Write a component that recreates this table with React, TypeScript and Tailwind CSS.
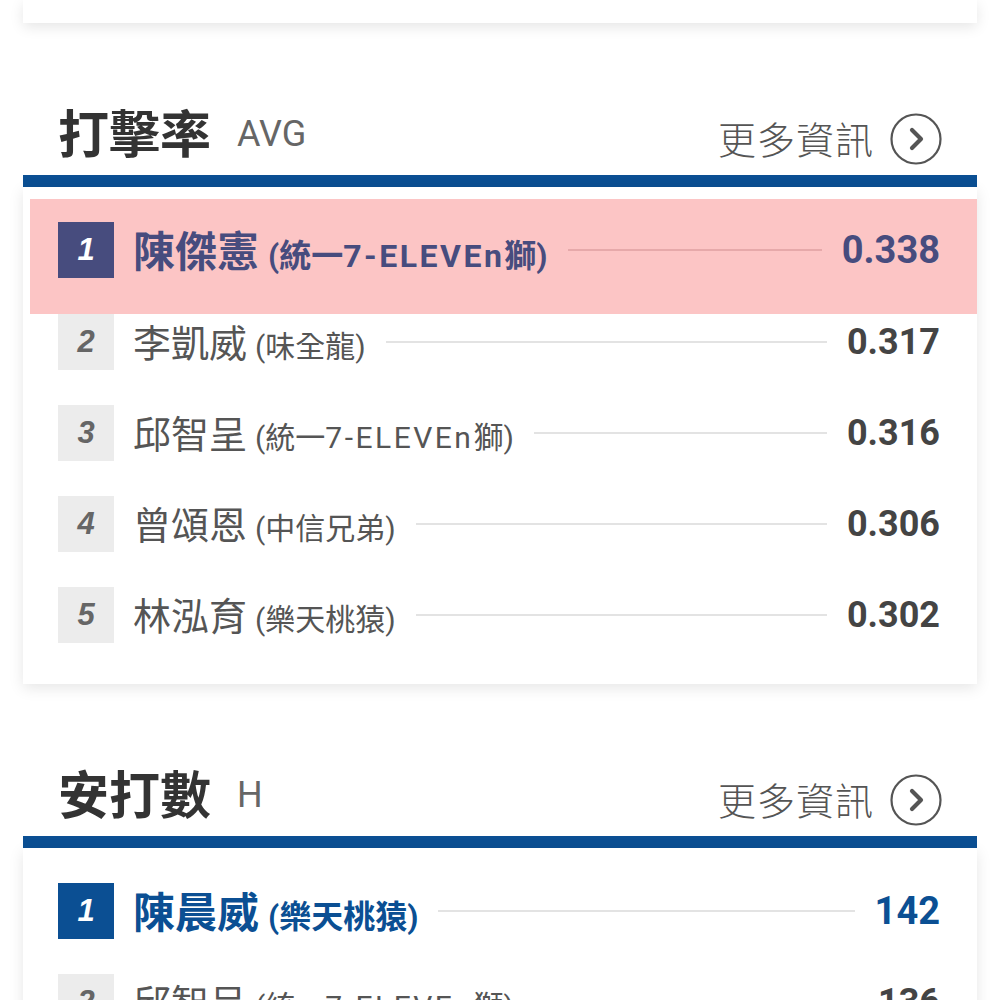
import React from "react";

type Leader = { rank: number; name: string; team: string; value: string };

const AVG: Leader[] = [
  { rank: 1, name: "陳傑憲", team: "統一7-ELEVEn獅", value: "0.338" },
  { rank: 2, name: "李凱威", team: "味全龍", value: "0.317" },
  { rank: 3, name: "邱智呈", team: "統一7-ELEVEn獅", value: "0.316" },
  { rank: 4, name: "曾頌恩", team: "中信兄弟", value: "0.306" },
  { rank: 5, name: "林泓育", team: "樂天桃猿", value: "0.302" },
];

const HITS: Leader[] = [
  { rank: 1, name: "陳晨威", team: "樂天桃猿", value: "142" },
  { rank: 2, name: "邱智呈", team: "統一7-ELEVEn獅", value: "136" },
  { rank: 3, name: "李凱威", team: "味全龍", value: "135" },
];

const cjk = { fontFamily: '"Noto Sans CJK TC", Roboto, sans-serif' };
const mixed = { fontFamily: 'Roboto, "Noto Sans CJK TC", sans-serif' };

function MoreIcon() {
  return (
    <svg width="52" height="52" viewBox="0 0 52 52" fill="none">
      <circle cx="26" cy="26" r="24.5" stroke="#555" strokeWidth="2.2" />
      <path
        d="M22 17 L31 26 L22 35"
        stroke="#555"
        strokeWidth="4.2"
        strokeLinecap="round"
        strokeLinejoin="round"
      />
    </svg>
  );
}

// latin part of the team name (7-ELEVEn) is set a bit looser than the CJK part
function TeamName(props: { team: string }) {
  const parts = props.team.split(/([0-9A-Za-z-]+)/).filter((p) => p !== "");
  return (
    <>
      {parts.map((p, i) =>
        /[0-9A-Za-z]/.test(p) ? (
          <span key={i} className="tracking-[2.5px]">
            {p}
          </span>
        ) : (
          <span key={i}>{p}</span>
        )
      )}
    </>
  );
}

function Row(props: { item: Leader; highlight: boolean; theme: "purple" | "blue" }) {
  const { item, highlight, theme } = props;
  const first = item.rank === 1;

  // leader row is drawn bigger and bold, the rest plain grey
  let boxClass = "bg-[#ececec] text-[#666]";
  let nameClass = "font-normal text-[#555]";
  let valueClass = "text-[36px] text-[#444]";
  let lineClass = "bg-[#e3e3e3]";

  if (first && theme === "purple") {
    boxClass = "bg-[#474c7e] text-white";
    nameClass = "font-bold text-[#474c7e]";
    valueClass = "text-[38px] text-[#474c7e]";
    lineClass = "bg-[#e6a9aa]";
  }
  if (first && theme === "blue") {
    boxClass = "bg-[#0b4f93] text-white";
    nameClass = "font-bold text-[#0b4f93]";
    valueClass = "text-[38px] text-[#0b4f93]";
  }

  return (
    <div
      className={
        highlight
          ? "ml-[7px] bg-[#fcc5c5] pl-[28px] pr-[37px] pt-[23px] pb-[36px]"
          : first
          ? "pl-[35px] pr-[37px] pt-[23px] pb-[35px]"
          : "pl-[35px] pr-[37px] pb-[35px]"
      }
    >
      <div className="flex h-[56px] items-center">
        <div
          className={
            "flex h-[56px] w-[56px] shrink-0 items-center justify-center text-[31px] font-bold italic " +
            boxClass
          }
          style={{ fontFamily: '"Liberation Sans", Arial, sans-serif' }}
        >
          {item.rank}
        </div>
        <div className={"ml-[19px] flex shrink-0 items-baseline " + nameClass}>
          <span className={first ? "text-[42px] leading-none" : "text-[38px] leading-none"}>
            {item.name}
          </span>
          <span
            className={
              first ? "ml-[9px] text-[32px] leading-none" : "ml-[8px] text-[30px] leading-none"
            }
            style={mixed}
          >
            (<TeamName team={item.team} />)
          </span>
        </div>
        <div className={"mx-[20px] h-[2px] flex-1 " + lineClass} />
        <div
          className={"shrink-0 font-bold leading-none " + valueClass}
          style={{ fontFamily: "Roboto, sans-serif" }}
        >
          {item.value}
        </div>
      </div>
    </div>
  );
}

function Section(props: {
  title: string;
  sub: string;
  items: Leader[];
  theme: "purple" | "blue";
  highlightFirst: boolean;
}) {
  const { title, sub, items, theme, highlightFirst } = props;
  return (
    <div className="mt-[90px]">
      <div className="mb-[10px] flex h-[52px] items-center justify-between px-[35px]">
        <div className="-mt-[16px] flex items-center">
          <span className="text-[51px] font-bold leading-[51px] text-[#333]">{title}</span>
          <span
            className="ml-[26px] mt-[6px] text-[36px] leading-none text-[#666]"
            style={{ fontFamily: "Roboto, sans-serif" }}
          >
            {sub}
          </span>
        </div>
        <div className="flex items-center gap-[16px]">
          <span className="-mt-[4px] text-[38px] font-light tracking-[1px] text-[#555]">
            更多資訊
          </span>
          <MoreIcon />
        </div>
      </div>
      <div className="h-[12px] bg-[#0b4f93]" />
      <div className="bg-white pt-[12px] pb-[6px] shadow-[0_4px_14px_rgba(0,0,0,0.10)]">
        {items.map((item) => (
          <Row
            key={item.rank}
            item={item}
            theme={theme}
            highlight={highlightFirst && item.rank === 1}
          />
        ))}
      </div>
    </div>
  );
}

export default function App() {
  return (
    <div className="h-[1000px] overflow-hidden bg-white px-[23px]" style={cjk}>
      <div className="h-[23px] bg-white shadow-[0_4px_14px_rgba(0,0,0,0.10)]" />
      <Section title="打擊率" sub="AVG" items={AVG} theme="purple" highlightFirst={true} />
      <Section title="安打數" sub="H" items={HITS} theme="blue" highlightFirst={false} />
    </div>
  );
}
